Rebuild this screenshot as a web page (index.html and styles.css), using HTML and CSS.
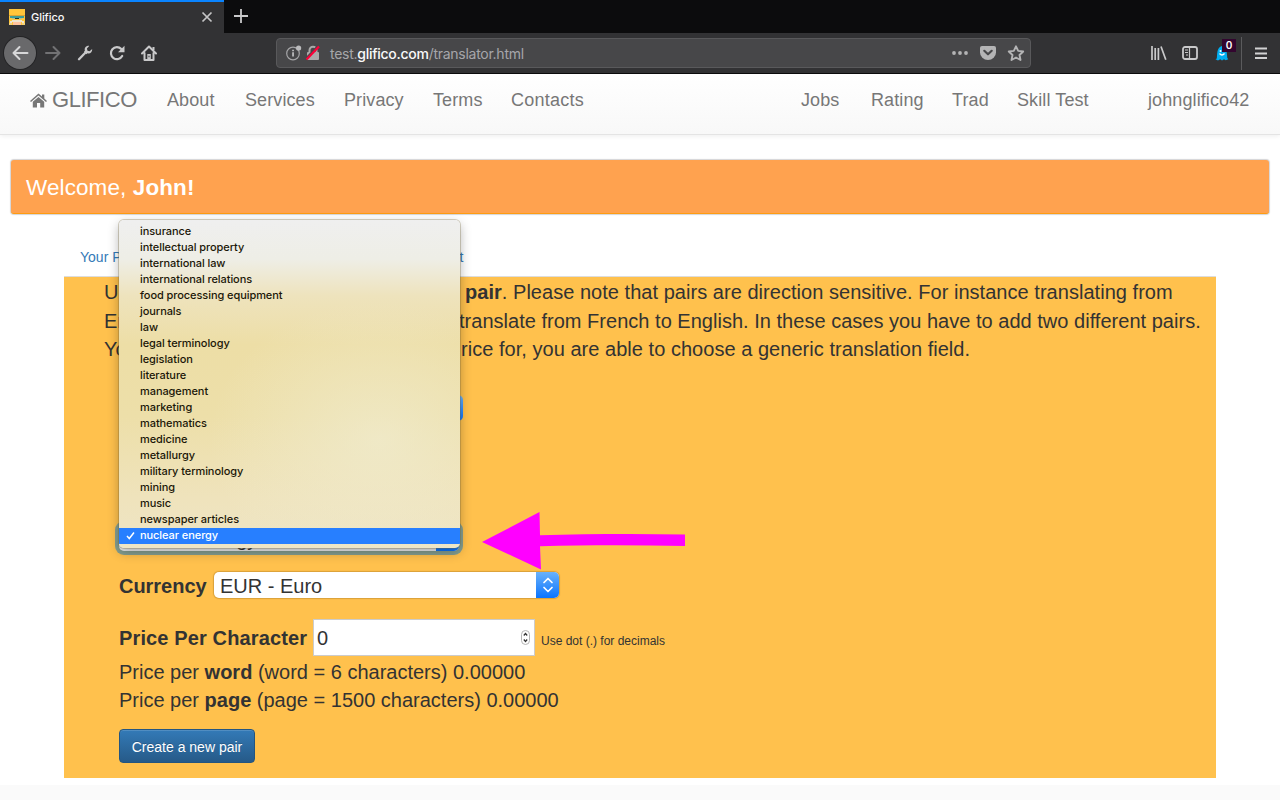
FILE: index.html
```html
<!DOCTYPE html>
<html lang="en">
<head>
<meta charset="utf-8">
<title>Glifico</title>
<link rel="stylesheet" href="styles.css">
</head>
<body>
<header class="browser">
  <div class="tabbar">
    <div class="tab">
      <svg class="favicon" width="16" height="16" viewBox="0 0 16 16"><rect width="16" height="16" fill="#ffc53a"/><path d="M0 6h16v1H0z" fill="#d9a437"/><path d="M1 7h14v2H1z" fill="#3c9c96"/><path d="M3 9h3v1H3zM10 9h3v1h-3z" fill="#a8c3a0"/><path d="M6 9h4v1H6z" fill="#26302e"/><path d="M3 11h10v2H3zM1 12h2v2H1zM13 12h2v2h-2z" fill="#efe5cf"/><path d="M0 14h3v2H0zM13 14h3v2h-3z" fill="#f3d27a"/><path d="M4 13h8v3H4z" fill="#ffc39e"/></svg>
      <span class="tab-title">Glifico</span>
      <svg class="tab-close" width="12" height="12" viewBox="0 0 12 12"><path d="M1.500 1.500l9 9M10.500 1.500l-9 9" stroke="#c4c4c5" stroke-width="1.700"/></svg>
    </div>
    <svg class="new-tab" width="16" height="16" viewBox="0 0 16 16"><path d="M8 1v14M1 8h14" stroke="#c9c9ca" stroke-width="1.800"/></svg>
  </div>
  <div class="toolbar">
    <div class="back"><svg width="18" height="16" viewBox="0 0 18 16"><path d="M16.500 8H2.500M8.500 2L2.500 8l6 6" fill="none" stroke="#d8d8d9" stroke-width="2" stroke-linecap="round" stroke-linejoin="round"/></svg></div>
    <svg class="icon" width="18" height="16" viewBox="0 0 18 16"><path d="M2 8h13.500M9.500 2l6 6-6 6" fill="none" stroke="#727274" stroke-width="2" stroke-linecap="round" stroke-linejoin="round"/></svg>
    <svg class="icon" width="16" height="16" viewBox="0 0 16 16"><path d="M2 14.200L9 7" stroke="#c9c9ca" stroke-width="2.300" stroke-linecap="round"/><path d="M12.200.9C9.200.6 7 3 7.900 5.700L7 6.800 9.300 9.200l1.100-.9c2.800.8 5-1.300 4.800-4.300L12.600 6.300 10.500 5.700 9.900 3.500z" fill="#c9c9ca"/></svg>
    <svg class="icon" width="16" height="16" viewBox="0 0 16 16"><path d="M12.300 4A6 6 0 1 0 13.200 11" fill="none" stroke="#c9c9ca" stroke-width="2.200" stroke-linecap="round"/><path d="M15.500.8v6.400H9z" fill="#c9c9ca"/></svg>
    <svg class="icon" width="16" height="16" viewBox="0 0 16 16"><path d="M1 8.500L8 1.500l7 7M3.500 8v7h9V8" fill="none" stroke="#c9c9ca" stroke-width="2" stroke-linecap="round" stroke-linejoin="round"/><path d="M6.300 9h3.500v6H6.300zM11.500 2h2v3h-2z" fill="#c9c9ca"/><path d="M7.500 10.700h1v1.500h-1z" fill="#323234"/></svg>
    <div class="urlbar">
      <svg width="16" height="16" viewBox="0 0 16 16"><circle cx="7" cy="8.500" r="6.300" fill="none" stroke="#a5a5a7" stroke-width="1.200"/><path d="M6.100 7.200h1.900v4.300H6.100zM6.100 4.700h1.900v1.600H6.100z" fill="#b4b4b6"/><circle cx="12.600" cy="3" r="2.600" fill="#bbbbbd"/></svg>
      <svg class="lock" width="16" height="16" viewBox="0 0 16 16"><path d="M4.500 8V5.200a3.500 3.500 0 0 1 7 0V8" fill="none" stroke="#aaa" stroke-width="2"/><rect x="2" y="7" width="12" height="8" rx="1" fill="#aaa"/><path d="M.500 14L12.500 1.500" stroke="#474749" stroke-width="2"/><path d="M1.500 14.500L14 1.500" stroke="#fc0038" stroke-width="2.200"/></svg>
      <span class="url">test.<b>glifico.com</b>/translator.html</span>
      <svg class="url-tools" width="76" height="18" viewBox="0 0 76 18"><g fill="#b4b4b5"><circle cx="4" cy="9" r="1.900"/><circle cx="10" cy="9" r="1.900"/><circle cx="16" cy="9" r="1.900"/></g><path d="M32 2h12q2 0 2 2v4.500a8 7.500 0 0 1-16 0V4q0-2 2-2z" fill="#b4b4b5"/><path d="M34.300 6.800L38 10.300l3.700-3.500" fill="none" stroke="#474749" stroke-width="2.200" stroke-linecap="round" stroke-linejoin="round"/><path d="M66 2.300l2.200 4.600 5 .6-3.700 3.500 1 5-4.500-2.500-4.500 2.500 1-5-3.700-3.500 5-.6z" fill="none" stroke="#b4b4b5" stroke-width="1.900" stroke-linejoin="round"/></svg>
    </div>
    <svg class="library" width="18" height="16" viewBox="0 0 18 16"><path d="M2 1v14M5.200 3v12M8.400 3v12M11 1.500L15.800 14.800" fill="none" stroke="#c9c9ca" stroke-width="1.700"/></svg>
    <svg class="sidebar" width="16" height="16" viewBox="0 0 16 16"><rect x="1" y="2" width="14" height="12" rx="2" fill="none" stroke="#c9c9ca" stroke-width="1.800"/><path d="M7.500 2v12M3 5h3M3 7.500h3M4 10h2" stroke="#c9c9ca" stroke-width="1.200"/></svg>
    <div class="ghost">
      <svg width="14" height="16" viewBox="0 0 14 16"><path d="M1.800 13.500C2.300 10 1.500 2 7 1c5 0 5 8.500 5.300 12l1 1.300-2.600 1-1.700-1-2 1.200-1.800-1.200L3 15.500.5 14.300z" fill="#00aef0"/><circle cx="5.500" cy="6" r="1" fill="#fff"/><path d="M4.500 8.500Q7 11.500 9.500 8.500" fill="none" stroke="#fff" stroke-width="1.300"/></svg>
      <span class="badge">0</span>
    </div>
    <div class="menu-button"><svg width="12" height="14" viewBox="0 0 12 14"><path d="M0 2.500h12M0 7.500h12M0 12h12" stroke="#d2d2d3" stroke-width="2"/></svg></div>
  </div>
</header>

<nav class="navbar">
  <a class="brand"><svg width="17" height="15" viewBox="0 0 17 15"><path d="M0 8L8.500.5 12 3.600V1.500h2.300v4L17 8l-1 1-7.500-6.500L1 9z" fill="#777"/><path d="M2.800 8.800L8.500 3.900l5.700 4.900V14.500h-4V10H7v4.500H2.800z" fill="#777"/></svg><span>GLIFICO</span></a>
  <div class="links">
    <a>About</a><a>Services</a><a>Privacy</a><a>Terms</a><a class="contacts">Contacts</a>
  </div>
  <div class="links account">
    <a>Jobs</a><a>Rating</a><a>Trad</a><a>Skill Test</a><a class="user">johnglifico42</a>
  </div>
</nav>

<main>
  <div class="welcome">Welcome, <b>John!</b></div>
  <section class="content">
    <div class="tabs"><a>Your P</a><a class="tab-end">t</a></div>
    <div class="panel">
      <div class="intro">
        <span>U</span><span class="l1"><b>pair</b>. Please note that pairs are direction sensitive. For instance translating from</span>
        <span>En</span><span class="l2">translate from French to English. In these cases you have to add two different pairs.</span>
        <span>Yo</span><span class="l3">rice for, you are able to choose a generic translation field.</span>
      </div>
      <form class="pair-form">
        <div class="select first"><i class="stepper"></i></div>
        <div class="select field"><span>nuclear energy</span><i class="stepper"></i></div>
        <div class="row currency">
          <label>Currency</label>
          <div class="select"><span>EUR - Euro</span><i class="stepper"><svg width="12" height="18" viewBox="0 0 12 18"><path d="M2 6.500l4-4 4 4M2 11.500l4 4 4-4" fill="none" stroke="#fff" stroke-width="1.700" stroke-linecap="round" stroke-linejoin="round"/></svg></i></div>
        </div>
        <div class="row price">
          <label>Price Per Character</label>
          <div class="number"><span>0</span><svg width="9" height="15" viewBox="0 0 9 15"><rect x=".5" y=".5" width="8" height="14" rx="4" fill="#fff" stroke="#b5b5b5"/><path d="M2.800 5.500l1.700-2 1.700 2M2.800 9.500l1.700 2 1.700-2" fill="none" stroke="#333" stroke-width="1.200"/></svg></div>
          <small>Use dot (.) for decimals</small>
        </div>
        <div class="totals">
          <p class="t1">Price per <b>word</b> (word = 6 characters) 0.00000</p>
          <p class="t2">Price per <b>page</b> (page = 1500 characters) 0.00000</p>
        </div>
        <button type="button" class="create">Create a new pair</button>
      </form>
      <ul class="dropdown">
        <li>insurance</li><li>intellectual property</li><li>international law</li><li>international relations</li><li>food processing equipment</li><li>journals</li><li>law</li><li>legal terminology</li><li>legislation</li><li>literature</li><li>management</li><li>marketing</li><li>mathematics</li><li>medicine</li><li>metallurgy</li><li>military terminology</li><li>mining</li><li>music</li><li>newspaper articles</li>
        <li class="selected"><svg width="9" height="9" viewBox="0 0 9 9"><path d="M1 5l2.300 2.500L8 1.500" fill="none" stroke="#fff" stroke-width="1.500"/></svg>nuclear energy</li>
      </ul>
      <svg class="arrow" width="204" height="58" viewBox="0 0 204 58"><path d="M0 30L57.500 0 58 23.200C105 22 155 21.500 203 22.600V34C155 33 105 33 58 34.200L59 57.500z" fill="#f0f"/></svg>
    </div>
  </section>
</main>
<footer class="footer"></footer>
</body>
</html>
```
FILE: styles.css
```css
* { box-sizing: border-box; }
html, body { margin: 0; }
body { width: 1280px; height: 800px; overflow: hidden; display: flex; flex-direction: column; background: #fff; color: #333; font-family: "Liberation Sans", sans-serif; font-size: 14px; }
svg { display: block; flex: none; }

.browser { height: 74px; background: #323234; border-bottom: 1px solid #0c0c0d; font-family: Inter, sans-serif; flex: none; }
.tabbar { height: 33px; background: #0c0c0d; display: flex; align-items: flex-start; }
.tab { width: 224px; height: 33px; border-top: 2px solid #0a84ff; background: #323234; display: flex; align-items: center; padding: 0 11px 1px 9px; color: #f9f9fa; }
.tab-title { font-size: 11px; margin-left: 6px; font-weight: 500; flex: 1; letter-spacing: -.05px; }
.new-tab { margin: 8px 0 0 9px; }
.toolbar { height: 40px; display: flex; align-items: center; padding-left: 4px; }
.back { width: 32px; height: 32px; border-radius: 50%; background: #69696b; box-shadow: 0 0 0 1px #242426; display: flex; align-items: center; justify-content: center; }
.icon { margin-left: 16px; }
.back + .icon { margin-left: 8px; }
.back + .icon + .icon { margin-left: 15px; }
.urlbar { width: 755px; height: 30px; margin-left: 119px; background: #474749; border: 1px solid #59595b; border-radius: 4px; display: flex; align-items: center; padding: 0 4px 0 9px; }
.lock { margin-left: 3px; }
.url { flex: 1; margin-left: 9px; color: #a6a6a9; font-size: 14px; letter-spacing: -.27px; padding-top: 1px; }
.url b { color: #f9f9fa; font-weight: 500; }
.library { margin-left: 119px; }
.sidebar { margin-left: 14px; }
.ghost { position: relative; margin-left: 17px; }
.badge { position: absolute; left: 7px; top: -6px; width: 14px; height: 13px; background: #33052f; color: #fff; font-size: 10px; font-weight: 600; line-height: 13px; text-align: center; }
.menu-button { height: 33px; border-left: 1px solid #5b5b5d; margin-left: 12px; padding-left: 13px; display: flex; align-items: center; }

.navbar { height: 61px; flex: none; display: flex; align-items: flex-start; padding: 14px 30px 0; background: linear-gradient(#fff, #f8f8f8); border-bottom: 1px solid #e4e4e4; box-shadow: 0 1px 5px rgba(0,0,0,.075); color: #777; font-size: 18px; line-height: 24px; }
.brand { display: flex; align-items: center; gap: 5px; width: 137px; font-size: 22px; letter-spacing: -.45px; }
.links { display: grid; grid-template-columns: 78px 99px 89px 78px 74px; white-space: nowrap; letter-spacing: .1px; }
.contacts { letter-spacing: .25px; }
.account { margin-left: auto; grid-template-columns: 70px 81px 65px 131px 102px; }

.welcome { margin: 25px 11px 0; height: 54px; padding: 0 15px; line-height: 55px; font-size: 22.5px; color: #fff; background: #ffa24f; border-bottom: 1px solid #ff9c12; border-radius: 3px; box-shadow: 0 0 1px 1px #d4d4d6; letter-spacing: .1px; }
.content { width: 1152px; margin: 24px auto 0; }
.tabs { height: 39px; border-bottom: 1px solid #ddd; display: flex; color: #337ab7; line-height: 38px; padding-left: 16px; }
.tab-end { margin-left: 338px; }
.panel { position: relative; height: 501px; background: #ffc14d; font-size: 20px; line-height: 28.5px; }
.intro { display: grid; grid-template-columns: 355px 1fr; padding: 1px 0 0 40px; white-space: nowrap; letter-spacing: .035px; }
.l1 { padding-left: 6px; }
.l2 { letter-spacing: .02px; }
.l3 { padding-left: 2px; }
.pair-form { padding: 31px 0 0 55px; }
.select { display: flex; justify-content: space-between; width: 345px; height: 26px; background: #fff; border-radius: 5px; box-shadow: 0 0 1px 1px rgba(170,120,30,.45); padding-left: 6px; line-height: 29px; overflow: hidden; }
.stepper { width: 23px; background: linear-gradient(#6ab2fa, #0a74ff); display: flex; align-items: center; justify-content: center; }
.first { justify-content: flex-end; width: 344px; background: none; box-shadow: none; }
.field { margin-top: 104px; width: 340px; background: #f2f2f2; box-shadow: 0 0 0 4px #859f91; }
.row { display: flex; align-items: center; }
.row label { font-weight: bold; }
.currency { margin-top: 20px; }
.currency label { width: 95px; line-height: 26px; padding-top: 2px; margin-bottom: -1px; letter-spacing: -.03px; }
.currency .select { margin-bottom: -1px; }
.price { margin-top: 21px; height: 37px; }
.price label { width: 194px; letter-spacing: .13px; padding-top: 2px; }
.number { width: 222px; height: 37px; background: #fff; border: 1px solid #ccc; display: flex; align-items: center; justify-content: space-between; padding: 0 4px 0 3px; }
.number span { padding-top: 2px; }
.price small { font-size: 12px; margin: 8px 0 0 6px; }
.totals { margin-top: 2px; line-height: 28px; }
.totals p { margin: 0; white-space: nowrap; }
.create { display: block; margin-top: 15px; width: 136px; height: 34px; border: 1px solid #245580; border-radius: 4px; background: linear-gradient(#337ab7, #265a88); box-shadow: inset 0 1px 0 rgba(255,255,255,.15); color: #fff; font: 14px "Liberation Sans", sans-serif; text-shadow: 0 -1px 0 rgba(0,0,0,.2); padding: 2px 0 0; white-space: nowrap; }

.dropdown { position: absolute; left: 55px; top: -57px; width: 341px; height: 328px; margin: 0; padding: 4px 0; list-style: none; border-radius: 5px; color: #1b1708; font: 500 11px/16px Inter, sans-serif; letter-spacing: -.07px; background: radial-gradient(ellipse 170px 140px at 260px 220px, rgba(240,236,208,.7), rgba(240,232,195,0)), linear-gradient(#efefef 0, #eeeee6 12%, #eee3bd 23%, #eddea6 38%, #eddfa9 60%, #efe3bc 85%, #eee5c5); box-shadow: 0 0 0 1px rgba(120,105,60,.3), 0 4px 12px rgba(0,0,0,.3); overflow: hidden; }
.dropdown li { height: 16px; padding-left: 21px; line-height: 14px; }
.dropdown .selected { display: flex; padding-left: 7px; gap: 5px; background: #277fff; color: #fff; }
.selected svg { margin-top: 3px; }
.arrow { position: absolute; left: 418px; top: 235px; }
.footer { height: 15px; margin-top: 7px; background: #fafafa; flex: none; }
```
